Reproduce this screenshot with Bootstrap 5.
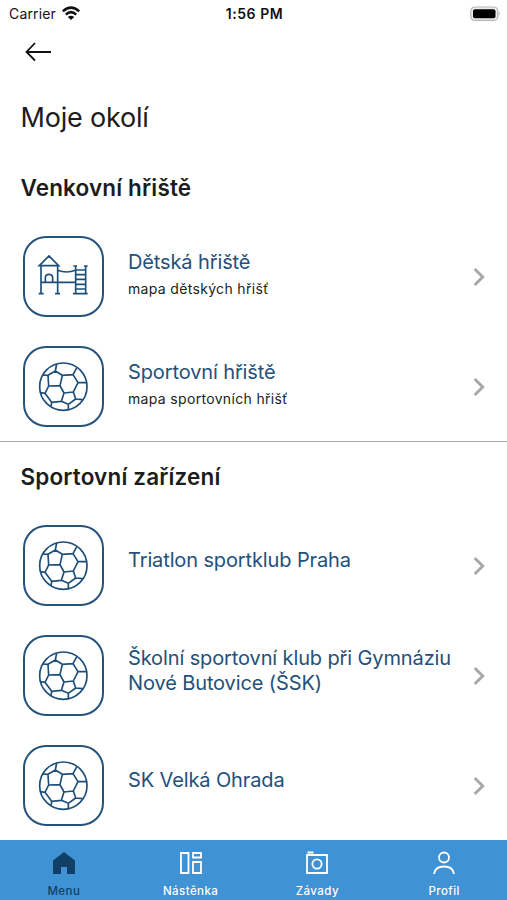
<!DOCTYPE html>
<html lang="cs">
<head>
<meta charset="utf-8">
<meta name="viewport" content="width=device-width, initial-scale=1">
<title>Moje okolí</title>
<link href="https://cdn.jsdelivr.net/npm/bootstrap@5.3.0/dist/css/bootstrap.min.css" rel="stylesheet">
<style>
body{font-family:Inter,"Liberation Sans",sans-serif;color:#1c1c1e;height:900px;overflow:hidden;background:#fff}
svg{display:block;flex:none}
.status-line{height:27px;font-size:14px;color:#111;padding:0 7px 0 9px}
.status-line .carrier{letter-spacing:.15px}
.status-line .clock{font-weight:600;letter-spacing:.55px}
.back-bar{height:49px;padding-left:25px}
.page-title{font-size:27px;font-weight:400;height:82px;line-height:83px;letter-spacing:-.2px;padding-left:20.5px}
.group-title{font-size:22.5px;font-weight:600;letter-spacing:.15px;padding-left:20.5px}
.group-title.outdoor{height:63px;padding-bottom:4px}
.group-title.indoor{height:68px;padding-top:1px}
.place-row{height:110px;padding:0 22px 0 22.5px;color:#1d4e7a}
.place-row > svg{margin-top:1px}
.tile{width:81px;height:81px;border:2px solid #25537b;border-radius:23px;flex:none;padding-top:1px}
.place-name{font-size:20px;line-height:25px;letter-spacing:-.12px;color:#24507a}
.place-note{font-size:14px;line-height:20px;letter-spacing:.33px;color:#222;margin-top:4px}
.texts{padding-left:24.5px;padding-bottom:3px}
.texts.single{padding-bottom:9px}
.group-split{border-top:1px solid #a9a9a9}
.tabs{height:60px;background:#3f92d4}
.tabs a{color:#fff;font-size:11.5px;line-height:14px;font-weight:500;letter-spacing:.45px;padding:9px 0 0 1px;gap:7px;text-decoration:none}
.tabs a.active{color:#123f66}
</style>
</head>
<body class="d-flex flex-column">
<svg width="0" height="0" class="position-absolute">
<symbol id="ball" viewBox="0 0 162 162"><g fill="none" stroke="currentColor" stroke-width="5" stroke-linejoin="round"><circle cx="82" cy="80" r="71"/><path d="M58 33L79 46L72 77L38 78L36 46ZM79 46L111 44L126 68L112 96L84 99L72 77M84 99L76 124L97 133L119 117L112 96M111 44L123 22M126 68H152M38 78L27 100L47 127L76 124M58 33L62 12M36 46L19 45M27 100L13 98M47 127L45 140M97 133L97 150M119 117L140 119"/></g></symbol>
<symbol id="chev" viewBox="0 0 12 20"><path d="M1.7 2L9.7 10L1.7 18" fill="none" stroke="#a8a8a8" stroke-width="3"/></symbol>
</svg>
<header class="status-line d-flex align-items-center justify-content-between">
<div class="d-flex align-items-center" style="width:100px;gap:5px"><span class="carrier">Carrier</span>
<svg width="20" height="15" viewBox="0 0 20 15" fill="none" stroke="#111" stroke-width="2.6"><path d="M1.8 5.4Q10-2 18.2 5.4M4.8 8.6Q10 3.8 15.2 8.6"/><path d="M10 14L6.8 10.9Q10 8.4 13.2 10.9Z" fill="#111" stroke="none"/></svg></div>
<span class="clock">1:56 PM</span>
<div class="d-flex justify-content-end" style="width:100px"><svg width="30" height="16" viewBox="0 0 30 16"><rect x=".8" y="1" width="27" height="13.4" rx="4" fill="#eee" stroke="#b5b5b5" stroke-width="1.2"/><rect x="3" y="3.200" width="22.5" height="9" rx="2" fill="#000"/><path d="M28.6 5.5Q30.6 7.5 28.6 9.5Z" fill="#aaa"/></svg></div>
</header>
<div class="back-bar d-flex align-items-center"><svg width="27" height="20" viewBox="0 0 27 20" fill="none" stroke="#111" stroke-width="1.8"><path d="M26 10H2M10 1L1.5 10L10 18.500"/></svg></div>
<h1 class="page-title mb-0">Moje okolí</h1>
<main>
<section>
<h2 class="group-title outdoor mb-0 d-flex align-items-center">Venkovní hřiště</h2>
<div class="place-row d-flex align-items-center">
<div class="tile d-flex align-items-center justify-content-center"><svg width="54" height="54" viewBox="0 0 162 162" fill="none" stroke="currentColor" stroke-width="5"><path d="M10 47L39 18L68 47ZM15 47V131M65 47V131M8 131H23M57 131H72M15 97H118M28 97V84Q28 73 39 73Q50 73 50 84V97M65 61Q92 71 118 61M119 48V131M149 48V131M112 48H123M144 48H155M111 131H155M119 60H149M119 74H149M119 88H149M119 103H149M119 117H149"/></svg></div>
<div class="texts flex-grow-1"><div class="place-name">Dětská hřiště</div><div class="place-note">mapa dětských hřišť</div></div>
<svg width="12" height="20"><use href="#chev"/></svg></div>
<div class="place-row d-flex align-items-center">
<div class="tile d-flex align-items-center justify-content-center"><svg width="54" height="54"><use href="#ball"/></svg></div>
<div class="texts flex-grow-1"><div class="place-name">Sportovní hřiště</div><div class="place-note">mapa sportovních hřišť</div></div>
<svg width="12" height="20"><use href="#chev"/></svg></div>
</section>
<section class="group-split">
<h2 class="group-title indoor mb-0 d-flex align-items-center">Sportovní zařízení</h2>
<div class="place-row d-flex align-items-center">
<div class="tile d-flex align-items-center justify-content-center"><svg width="54" height="54"><use href="#ball"/></svg></div>
<div class="texts single flex-grow-1"><div class="place-name">Triatlon sportklub Praha</div></div>
<svg width="12" height="20"><use href="#chev"/></svg></div>
<div class="place-row d-flex align-items-center">
<div class="tile d-flex align-items-center justify-content-center"><svg width="54" height="54"><use href="#ball"/></svg></div>
<div class="texts single flex-grow-1"><div class="place-name">Školní sportovní klub při Gymnáziu<br>Nové Butovice (ŠSK)</div></div>
<svg width="12" height="20"><use href="#chev"/></svg></div>
<div class="place-row d-flex align-items-center">
<div class="tile d-flex align-items-center justify-content-center"><svg width="54" height="54"><use href="#ball"/></svg></div>
<div class="texts single flex-grow-1"><div class="place-name">SK Velká Ohrada</div></div>
<svg width="12" height="20"><use href="#chev"/></svg></div>
</section>
</main>
<nav class="tabs fixed-bottom nav nav-fill flex-nowrap">
<a href="#" class="active col-3 d-flex flex-column align-items-center"><svg width="28" height="28" viewBox="0 0 28 28"><path d="M3 11.5L14 3L25 11.5V25H17V18H11V25H3Z" fill="currentColor"/></svg><span>Menu</span></a>
<a href="#" class="col-3 d-flex flex-column align-items-center"><svg width="28" height="28" viewBox="0 0 28 28" fill="none" stroke="currentColor" stroke-width="1.8"><path d="M4 4H11.500V24H4ZM16 4H24V8.500H16ZM16 13H24V24H16Z"/></svg><span>Nástěnka</span></a>
<a href="#" class="col-3 d-flex flex-column align-items-center"><svg width="28" height="28" viewBox="0 0 28 28" fill="none" stroke="currentColor" stroke-width="1.8"><path d="M4 6H24V24H4ZM4.500 3.500H10.500"/><circle cx="14" cy="15" r="4.600"/></svg><span>Závady</span></a>
<a href="#" class="col-3 d-flex flex-column align-items-center"><svg width="28" height="28" viewBox="0 0 28 28" fill="none" stroke="currentColor" stroke-width="1.8"><circle cx="14" cy="8.500" r="5"/><path d="M4 25Q5 17.500 14 17.500T24 25"/></svg><span>Profil</span></a>
</nav>
<script src="https://cdn.jsdelivr.net/npm/bootstrap@5.3.0/dist/js/bootstrap.bundle.min.js"></script>
</body>
</html>
